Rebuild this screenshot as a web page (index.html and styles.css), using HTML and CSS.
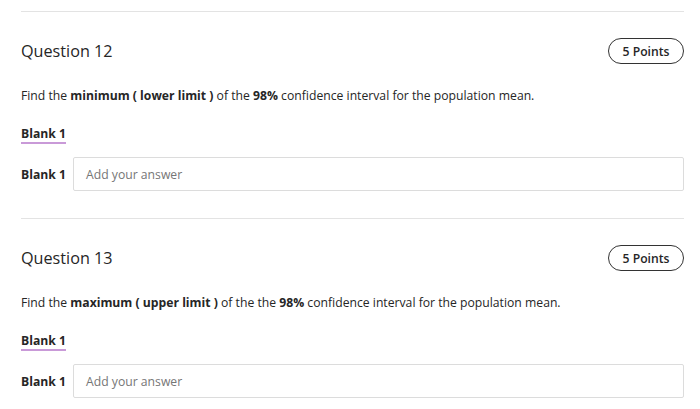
FILE: index.html
```html
<!DOCTYPE html>
<html>
<head>
<meta charset="utf-8">
<link rel="stylesheet" href="styles.css">
</head>
<body>
<main class="page">
  <section class="question">
    <div class="q-head">
      <h2 class="q-title">Question 12</h2>
      <span class="points">5 Points</span>
    </div>
    <p class="q-text">Find the <b>minimum ( lower limit )</b> of the <b>98%</b> confidence interval for the population mean.</p>
    <div class="blank-tab"><span>Blank 1</span></div>
    <div class="blank-row">
      <label class="blank-label">Blank 1</label>
      <div class="answer">Add your answer</div>
    </div>
  </section>
  <section class="question">
    <div class="q-head">
      <h2 class="q-title">Question 13</h2>
      <span class="points">5 Points</span>
    </div>
    <p class="q-text">Find the <b>maximum ( upper limit )</b> of the the <b>98%</b> confidence interval for the population mean.</p>
    <div class="blank-tab"><span>Blank 1</span></div>
    <div class="blank-row">
      <label class="blank-label">Blank 1</label>
      <div class="answer">Add your answer</div>
    </div>
  </section>
</main>
</body>
</html>
```
FILE: styles.css
```css
html, body {
  margin: 0;
  padding: 0;
  background: #ffffff;
}
body {
  font-family: "Open Sans", "Noto Sans", sans-serif;
  color: #262626;
}
.page {
  padding: 11px 16px 0 21px;
}
.question {
  border-top: 1px solid #e3e3e3;
  padding-top: 26px;
  padding-bottom: 27px;
}
.q-head {
  display: flex;
  align-items: center;
  justify-content: space-between;
  height: 26px;
}
.q-title {
  margin: 0;
  font-size: 16.2px;
  font-weight: 400;
  line-height: 24px;
}
.points {
  box-sizing: border-box;
  height: 26px;
  width: 76px;
  border: 1px solid #333;
  border-radius: 13px;
  font-size: 12.2px;
  font-weight: 600;
  display: flex;
  align-items: center;
  justify-content: center;
}
.q-text {
  margin: 22px 0 0;
  font-size: 12.2px;
  line-height: 20px;
}
.q-text b {
  font-weight: 700;
}
.blank-tab {
  margin-top: 20px;
  height: 18px;
  display: flex;
  align-items: flex-start;
}
.blank-tab span {
  font-size: 12.2px;
  font-weight: 700;
  line-height: 16px;
  border-bottom: 2px solid #c99ad8;
}
.blank-row {
  display: flex;
  align-items: center;
  margin-top: 13px;
}
.blank-label {
  font-size: 12.2px;
  font-weight: 700;
  width: 52px;
}
.answer {
  flex: 1;
  box-sizing: border-box;
  height: 34px;
  border: 1px solid #dcdcdc;
  border-radius: 2px;
  padding: 0 12px;
  display: flex;
  align-items: center;
  font-size: 12.2px;
  color: #767676;
}
```
